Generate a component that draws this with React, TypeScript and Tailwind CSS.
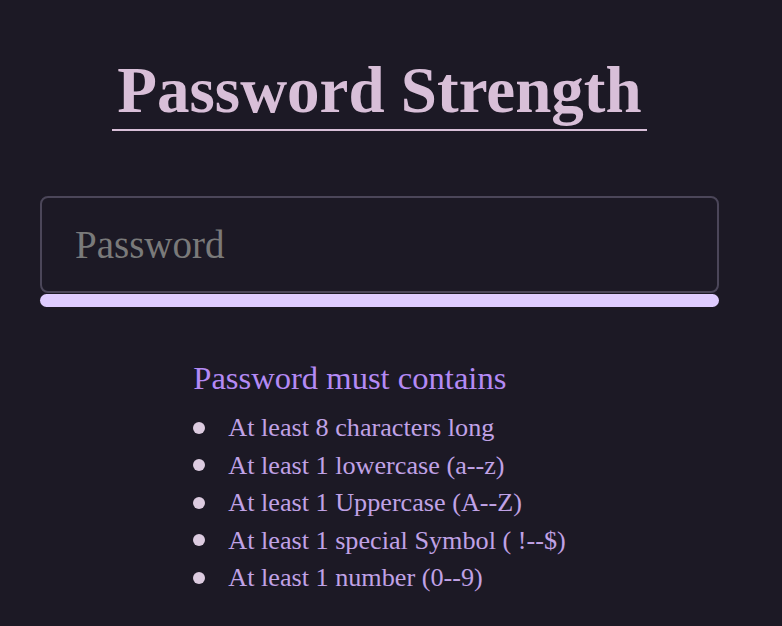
const rules = [
  'At least 8 characters long',
  'At least 1 lowercase (a--z)',
  'At least 1 Uppercase (A--Z)',
  'At least 1 special Symbol ( !--$)',
  'At least 1 number (0--9)',
];

export default function App() {
  return (
    <div className="min-h-screen bg-[#1c1925] font-['Liberation_Serif','Times_New_Roman',serif]">
      <div className="ml-[40px] flex w-[679px] flex-col items-center">
        <h1 className="mt-[51px] border-b-2 border-[#d8bfd8] px-[5px] text-[65px] font-bold leading-[78px] text-[#d8bfd8]">
          Password Strength
        </h1>

        <div className="mt-[65px] w-full">
          <input
            type="password"
            placeholder="Password"
            className="h-[97px] w-full rounded-[8px] border-2 border-[#4b4659] bg-transparent px-[33px] text-[39px] text-[#e6dcf0] outline-none placeholder:text-[#7a7a7a]"
          />
          <div className="mt-px h-[13px] w-full rounded-full bg-[#dfccff]" />
        </div>

        <div className="mt-[53px]">
          <h2 className="text-[32.6px] leading-[37px] text-[#b48af5]">Password must contains</h2>
          <ul className="mt-[12px]">
            {rules.map((rule) => (
              <li key={rule} className="flex items-center text-[26.2px] leading-[37.5px] text-[#c0a2e6]">
                <span className="mr-[23px] h-3 w-3 shrink-0 rounded-full bg-[#dccbe0]" />
                {rule}
              </li>
            ))}
          </ul>
        </div>
      </div>
    </div>
  );
}
